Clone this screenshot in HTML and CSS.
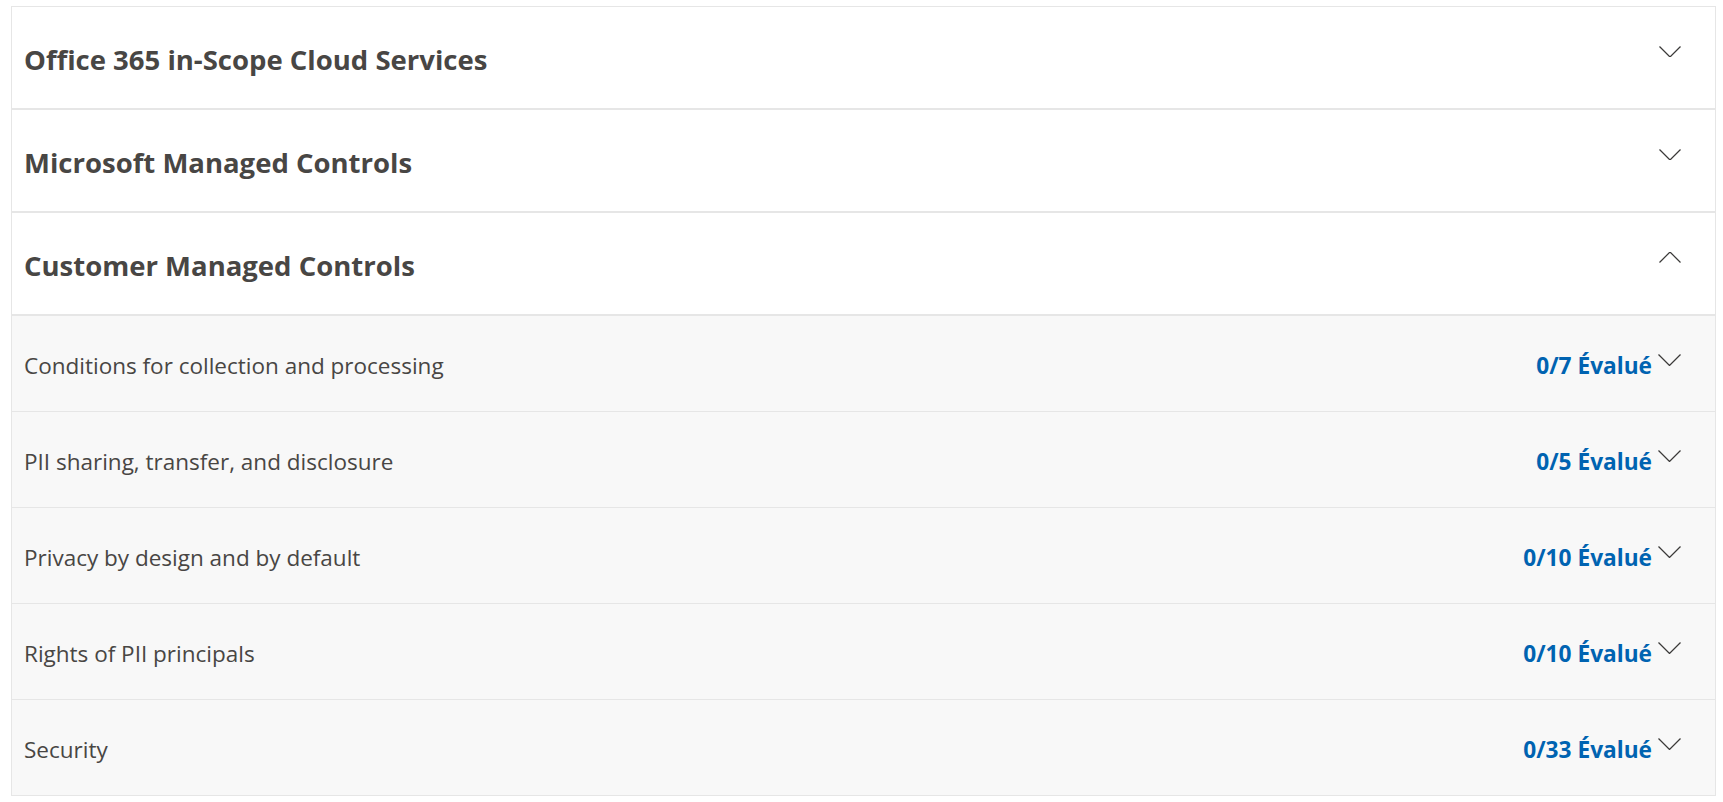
FILE: index.html
```html
<!DOCTYPE html>
<html lang="en">
<head>
<meta charset="utf-8">
<title>Controls</title>
<link rel="stylesheet" href="styles.css">
</head>
<body>
<div class="page">
  <div class="accordion">
    <div class="section">
      <div class="section-head">
        <span class="section-title">Office 365 in-Scope Cloud Services</span>
        <svg class="chev chev-head" width="22" height="11" viewBox="0 0 22 11"><path d="M0.5 0.5 L11 11 L21.5 0.5" /></svg>
      </div>
    </div>
    <div class="section">
      <div class="section-head">
        <span class="section-title">Microsoft Managed Controls</span>
        <svg class="chev chev-head" width="22" height="11" viewBox="0 0 22 11"><path d="M0.5 0.5 L11 11 L21.5 0.5" /></svg>
      </div>
    </div>
    <div class="section">
      <div class="section-head">
        <span class="section-title">Customer Managed Controls</span>
        <svg class="chev chev-head" width="22" height="11" viewBox="0 0 22 11"><path d="M0.5 10.5 L11 0 L21.5 10.5" /></svg>
      </div>
      <div class="rows">
        <div class="row">
          <span class="row-label">Conditions for collection and processing</span>
          <div class="row-right">
            <span class="count">0/7 Évalué</span>
            <svg class="chev chev-row" width="23" height="12" viewBox="0 0 23 12"><path d="M0.5 0.5 L11.5 11.5 L22.5 0.5" /></svg>
          </div>
        </div>
        <div class="row">
          <span class="row-label">PII sharing, transfer, and disclosure</span>
          <div class="row-right">
            <span class="count">0/5 Évalué</span>
            <svg class="chev chev-row" width="23" height="12" viewBox="0 0 23 12"><path d="M0.5 0.5 L11.5 11.5 L22.5 0.5" /></svg>
          </div>
        </div>
        <div class="row">
          <span class="row-label">Privacy by design and by default</span>
          <div class="row-right">
            <span class="count">0/10 Évalué</span>
            <svg class="chev chev-row" width="23" height="12" viewBox="0 0 23 12"><path d="M0.5 0.5 L11.5 11.5 L22.5 0.5" /></svg>
          </div>
        </div>
        <div class="row">
          <span class="row-label">Rights of PII principals</span>
          <div class="row-right">
            <span class="count">0/10 Évalué</span>
            <svg class="chev chev-row" width="23" height="12" viewBox="0 0 23 12"><path d="M0.5 0.5 L11.5 11.5 L22.5 0.5" /></svg>
          </div>
        </div>
        <div class="row">
          <span class="row-label">Security</span>
          <div class="row-right">
            <span class="count">0/33 Évalué</span>
            <svg class="chev chev-row" width="23" height="12" viewBox="0 0 23 12"><path d="M0.5 0.5 L11.5 11.5 L22.5 0.5" /></svg>
          </div>
        </div>
      </div>
    </div>
  </div>
</div>
</body>
</html>
```
FILE: styles.css
```css
html, body {
  margin: 0;
  padding: 0;
  background: #ffffff;
}

body {
  font-family: "Open Sans", "Noto Sans", "Liberation Sans", sans-serif;
  color: #484644;
}

.page {
  padding: 6px 7px 0 11px;
}

.accordion {
  border: 1px solid #e6e6e6;
  border-bottom: none;
  background: #ffffff;
}

.section-head {
  height: 101px;
  border-bottom: 2px solid #e6e6e6;
  display: flex;
  align-items: center;
  justify-content: space-between;
  padding: 0 34px 0 12px;
  background: #ffffff;
}

.section-title {
  font-size: 27.5px;
  font-weight: 700;
  line-height: 34px;
  padding-top: 5px;
  color: #484644;
  white-space: nowrap;
}

.chev {
  display: block;
  fill: none;
  stroke: #3b3a39;
  stroke-width: 1.25;
  flex: none;
}

.chev-head {
  margin-bottom: 12px;
}

.rows {
  background: #f8f8f8;
}

.row {
  height: 95px;
  border-bottom: 1px solid #e6e6e6;
  display: flex;
  align-items: center;
  justify-content: space-between;
  padding: 0 34px 0 12px;
}

.row-label {
  font-size: 22.5px;
  font-weight: 400;
  line-height: 30px;
  padding-top: 5.5px;
  color: #484644;
  white-space: nowrap;
}

.row-right {
  display: flex;
  align-items: center;
  gap: 6px;
}

.count {
  font-size: 22.7px;
  font-weight: 700;
  line-height: 28px;
  padding-top: 4px;
  color: #0063b1;
  white-space: nowrap;
}

.chev-row {
  margin-bottom: 8px;
}
```
